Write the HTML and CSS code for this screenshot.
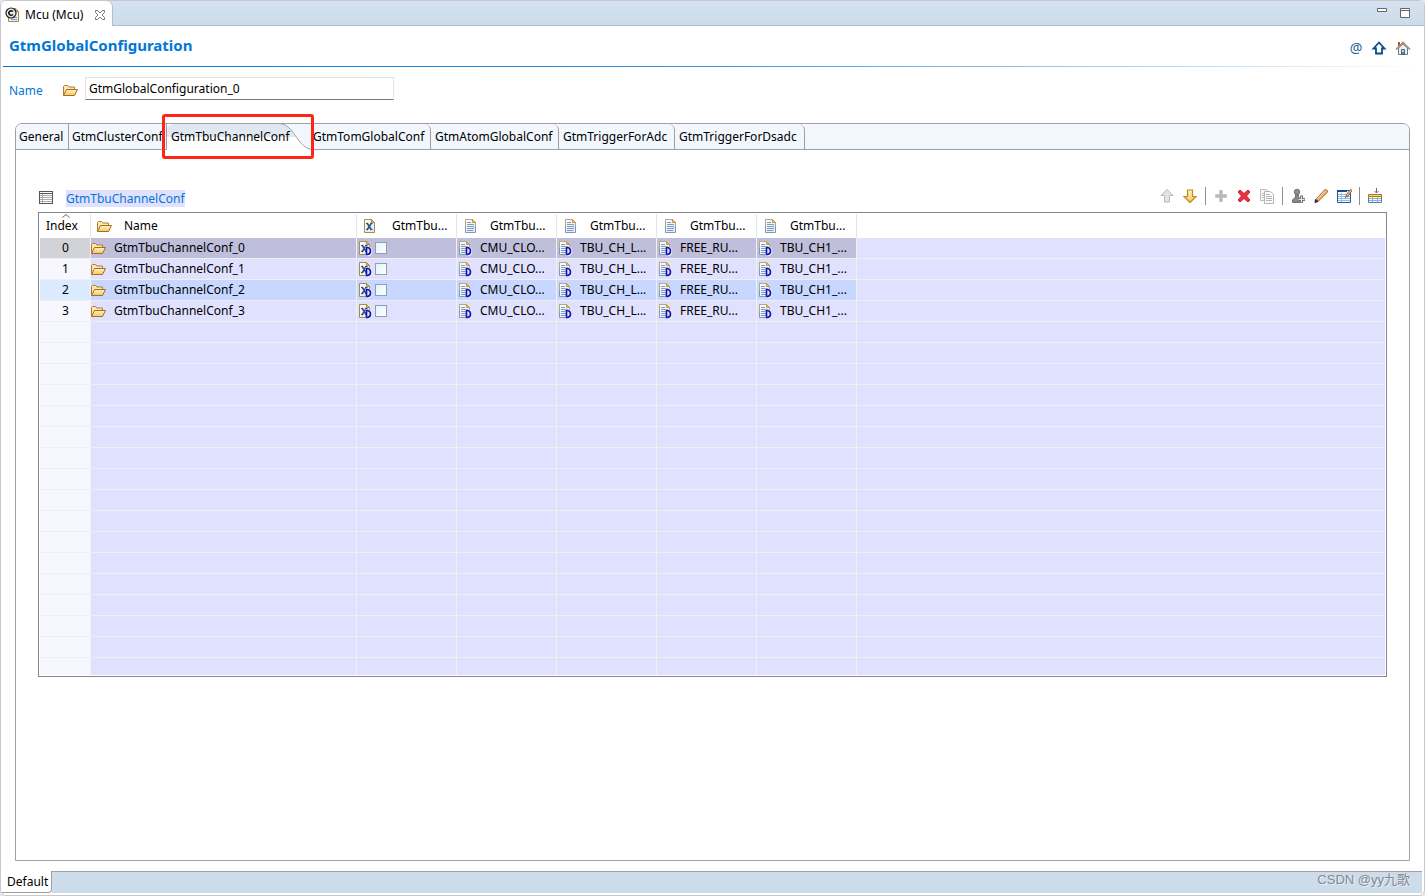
FILE: index.html
```html
<!DOCTYPE html>
<html lang="en">
<head>
<meta charset="utf-8">
<title>Mcu (Mcu)</title>
<link rel="stylesheet" href="styles.css">
</head>
<body>
<svg class="defs" aria-hidden="true">
  <defs>
    <linearGradient id="gold" x1="0" y1="0" x2="0" y2="1"><stop offset="0" stop-color="#fff3c4"/><stop offset="1" stop-color="#f3c566"/></linearGradient>
    <linearGradient id="paper" x1="0" y1="0" x2="1" y2="1"><stop offset="0" stop-color="#ffffff"/><stop offset="1" stop-color="#dbe6f6"/></linearGradient>
  </defs>
  <symbol id="folder" viewBox="1 0 16 16">
    <path d="M1.500 13V4.500l1-1h3l1.500 1.500h5.500v3" fill="#fbe6b0" stroke="#b27a2c"/>
    <path d="M1.500 13.500L4.500 7.500h11L12.500 13.500z" fill="url(#gold)" stroke="#a86d20"/>
  </symbol>
  <symbol id="doc" viewBox="1 0 16 16">
    <path d="M3.500 1.500h7l3 3v10h-10z" fill="url(#paper)" stroke="#8796ae"/>
    <path d="M3.500 8V1.500h7l3 3V7" fill="none" stroke="#b9a878"/>
    <path d="M10.500 1.500v3h3z" fill="#e5c169" stroke="#c49b48"/>
    <path d="M5 4.500h4M5 6.500h7M5 8.500h7M5 10.500h7M5 12.500h6" stroke="#7d9cc4"/>
  </symbol>
  <symbol id="xdoc" viewBox="1 0 16 16">
    <path d="M3.500 1.500h7l3 3v10h-10z" fill="url(#paper)" stroke="#ad8a42"/>
    <path d="M10.500 1.500v3h3z" fill="#e5c169" stroke="#b68c3b"/>
    <path d="M6 5l4.500 7M10.500 5L6 12" stroke="#2e527c" stroke-width="1.600"/>
    <path d="M5 5.500h2M9.500 5.500h2M5 11.500h2M9.500 11.500h2" stroke="#2e527c"/>
  </symbol>
  <symbol id="badge" viewBox="1 0 16 16">
    <path d="M9.500 7.500h2Q15 8 15 11.500T11.500 15h-2" fill="none" stroke="#e4e6ff" stroke-width="2.600"/>
    <path d="M10.500 7.500h1Q14.500 8 14.500 11T11.500 14.500h-1z" fill="#dfe1ff" stroke="#1414a8" stroke-width="1.600"/>
  </symbol>
</svg>

<main class="editor">
  <header class="topbar">
    <div class="file-tab">
      <svg class="icon" viewBox="0 0 16 16"><path d="M5.500 1.500h5l3 3v10h-10V8" fill="url(#paper)" stroke="#ad8a42"/><path d="M10.500 1.500v3h3z" fill="#e5c169" stroke="#b68c3b"/><path d="M6 10.500h6M6 12.500h6" stroke="#7d9cc4"/><circle cx="6" cy="6" r="5" fill="#e8e8e8" stroke="#222" stroke-width="1.200"/><path d="M8 4.500Q6 3 4.500 4.500T4.500 7.500T8 7.500" fill="none" stroke="#111" stroke-width="1.500"/></svg>
      <span>Mcu (Mcu)</span>
      <button class="plain" aria-label="Close"><svg class="close-icon" viewBox="0 0 12 12"><path d="M1.500 1.500h2L6 4l2.500-2.500h2v2L8 6l2.500 2.500v2h-2L6 8l-2.500 2.500h-2v-2L4 6 1.500 3.500z" fill="#fff" stroke="#777"/></svg></button>
    </div>
    <div class="window-actions">
      <button class="plain" aria-label="Minimize"><svg class="win-icon" viewBox="0 0 12 12"><path d="M1.500 2.500h9v3h-9z" fill="#fff" stroke="#666"/></svg></button>
      <button class="plain" aria-label="Maximize"><svg class="win-icon" viewBox="0 0 12 12"><path d="M1.500 2.500h9v9h-9zM1.500 4.500h9" fill="#fff" stroke="#666"/></svg></button>
    </div>
  </header>

  <div class="title-row">
    <h1>GtmGlobalConfiguration</h1>
    <div class="title-actions">
      <button class="plain at" aria-label="Annotations">@</button>
      <button class="plain" aria-label="Up"><svg class="icon" viewBox="0 0 16 16"><path d="M8 2.500L13.500 8.500H11v5H5v-5H2.500z" fill="#fff" stroke="#0b4a8c" stroke-width="1.800"/></svg></button>
      <button class="plain" aria-label="Home"><svg class="icon" viewBox="0 0 16 16"><path d="M4 2v4" stroke="#a25c45" stroke-width="2"/><path d="M3.500 8v6.500h9V8L8 4z" fill="#e6f0f8" stroke="#5c7da0"/><path d="M1 9.500l7-7 7 7" fill="none" stroke="#b58a61" stroke-width="1.700"/><path d="M6.500 14.500v-5h3v5z" fill="#5b9447" stroke="#3f6aa8"/><path d="M7 10h2v2H7z" fill="#f6dc45"/></svg></button>
    </div>
  </div>

  <div class="name-row">
    <label for="name">Name</label>
    <svg class="icon"><use href="#folder"/></svg>
    <input id="name" type="text" value="GtmGlobalConfiguration_0">
  </div>

  <section class="folder">
    <div class="tabs" role="tablist">
      <button role="tab" class="tab w-general">General</button>
      <button role="tab" class="tab w-cluster">GtmClusterConf</button>
      <button role="tab" class="tab selected" aria-selected="true">
        <svg class="tab-curve" viewBox="0 0 34 27"><path d="M0 0C16 1 18 26 34 26.500V0z" fill="#f2f7fe"/><path d="M0 .5C16 1 18 26 34 26.500M0 .5h34" fill="none" stroke="#a0a0a0"/></svg>
        <span class="tab-label">GtmTbuChannelConf</span>
        <span class="highlight"></span>
      </button>
      <button role="tab" class="tab w-tom">GtmTomGlobalConf</button>
      <button role="tab" class="tab w-atom">GtmAtomGlobalConf</button>
      <button role="tab" class="tab w-adc">GtmTriggerForAdc</button>
      <button role="tab" class="tab w-dsadc">GtmTriggerForDsadc</button>
      <span class="tab-rest"></span>
    </div>

    <div class="panel">
      <div class="list-head">
        <svg class="icon" viewBox="0 0 16 16" shape-rendering="crispEdges"><path d="M1.500 1.500h13v12h-13z" fill="#fff" stroke="#555"/><path d="M2 3.500h12" stroke="#555"/><path d="M4.500 4v9M5 5.500h9M5 7.500h9M5 9.500h9M5 11.500h9M2 5.500h2M2 7.500h2M2 9.500h2M2 11.500h2" stroke="#aaa"/></svg>
        <h2>GtmTbuChannelConf</h2>
        <div class="toolbar">
          <button class="plain" aria-label="Move up"><svg class="icon" viewBox="0 0 16 16"><path d="M8 1.500l6 6h-3.500v6.500h-5V7.500H2z" fill="#e4e4e0" stroke="#b9b9b5"/></svg></button>
          <button class="plain" aria-label="Move down"><svg class="icon" viewBox="0 0 16 16"><path d="M8 14.500l6-6h-3.500V2h-5v6.500H2z" fill="url(#gold)" stroke="#c18a12" stroke-width="1.200"/></svg></button>
          <span class="separator"></span>
          <button class="plain" aria-label="Add"><svg class="icon" viewBox="0 0 16 16"><path d="M6.500 2.500h3v4h4v3h-4v4h-3v-4h-4v-3h4z" fill="#b7b9b2" stroke="#c9cac4"/></svg></button>
          <button class="plain" aria-label="Delete"><svg class="icon" viewBox="0 0 16 16"><path d="M2 4l2-2 4 3.500L12 2l2 2-3.500 4 3.500 4-2 2-4-3.500L4 14l-2-2 3.500-4z" fill="#ed3044" stroke="#c3202e"/></svg></button>
          <button class="plain" aria-label="Duplicate"><svg class="icon" viewBox="0 0 16 16"><path d="M1.500 1.500h6l2 2v9h-8z" fill="#f5f5f3" stroke="#bcbcb8"/><path d="M3 5.500h2M3 7.500h2M3 9.500h2" stroke="#bbb"/><path d="M5.500 3.500h6l3 3v9h-9z" fill="#fafaf8" stroke="#b4b4b0"/><path d="M7 6.500h4M7 8.500h6M7 10.500h6M7 12.500h6" stroke="#b4b4b0"/></svg></button>
          <span class="separator"></span>
          <button class="plain" aria-label="Add user value"><svg class="icon" viewBox="0 0 16 16"><circle cx="7" cy="4" r="2.800" fill="#8e8e8e" stroke="#777"/><path d="M5.500 7h3v2l2 2v3.500h-8V12l3-3z" fill="#888" stroke="#717171"/><path d="M11.500 7.500v7.500M8 11.500h7" stroke="#777" stroke-width="3"/><path d="M11.500 8.500v6M8.500 11.500h6" stroke="#e8e8e8"/></svg></button>
          <button class="plain" aria-label="Edit"><svg class="icon" viewBox="0 0 16 16"><path d="M3 11.500L11.500 2l1.500-.5 1.500 1.500-.5 1.500L5 13.500z" fill="#f5b16a" stroke="#a65d24"/><path d="M2 14.500l.5-3 2.500 2z" fill="#18357c" stroke="#102866"/><path d="M5 10.500l7-7.500" stroke="#ffe0b6"/></svg></button>
          <button class="plain" aria-label="Edit table"><svg class="icon" viewBox="0 0 16 16"><path d="M1.500 2.500h13v12h-13z" fill="#f4faff" stroke="#24609d"/><path d="M1 3h10" stroke="#154d8b" stroke-width="2"/><path d="M5.500 5v9M2 6.500h12M2 8.500h12M2 10.500h12M2 12.500h12" stroke="#93bde4"/><path d="M9.500 9.500l1-3 4-5 1.500 1-4 5.500z" fill="#efc49a" stroke="#8f5c3a"/></svg></button>
          <span class="separator"></span>
          <button class="plain" aria-label="Insert column"><svg class="icon" viewBox="0 0 16 16"><path d="M1.500 6.500h13v8h-13z" fill="#f4faff" stroke="#5580a2"/><path d="M2 10.500h12M2 12.500h12M5.500 8v6M10.500 8v6" stroke="#8db2d0"/><path d="M1.500 6.500h13v2h-13z" fill="#ffd36a" stroke="#b87a18"/><path d="M9.500 0v5M7.500 3l2 2 2-2" fill="none" stroke="#54738b"/></svg></button>
        </div>
      </div>

      <div class="grid">
        <table>
          <colgroup><col class="c-index"><col class="c-name"><col class="c-val"><col class="c-val"><col class="c-val"><col class="c-val"><col class="c-val"><col></colgroup>
          <thead>
            <tr>
              <th class="index"><svg class="sort" viewBox="0 0 8 4"><path d="M.5 3.500L4 .5l3.500 3" fill="none" stroke="#666"/></svg>Index</th>
              <th><span class="head"><svg class="icon"><use href="#folder"/></svg>Name</span></th>
              <th><span class="head x-head"><svg class="icon"><use href="#xdoc"/></svg>GtmTbu...</span></th>
              <th><span class="head"><svg class="icon"><use href="#doc"/></svg>GtmTbu...</span></th>
              <th><span class="head"><svg class="icon"><use href="#doc"/></svg>GtmTbu...</span></th>
              <th><span class="head"><svg class="icon"><use href="#doc"/></svg>GtmTbu...</span></th>
              <th><span class="head"><svg class="icon"><use href="#doc"/></svg>GtmTbu...</span></th>
              <th class="rest"></th>
            </tr>
          </thead>
          <tbody id="rows"></tbody>
        </table>
      </div>
    </div>
  </section>

  <footer class="bottombar">
    <button class="page-tab">Default</button>
    <div class="bottom-fill"><span class="watermark">CSDN @yy九歌</span></div>
  </footer>
</main>
<script src="script.js"></script>
</body>
</html>
```
FILE: styles.css
```css
* { box-sizing: border-box; }

body {
  margin: 0;
  background: #e6e6f2;
  color: #000;
  font: 12px/16px "Noto Sans", "Noto Sans CJK SC", sans-serif;
}

button, input { font: inherit; color: inherit; }
h1, h2 { margin: 0; }
.defs { position: absolute; width: 0; height: 0; }
.icon { display: block; flex: none; width: 16px; height: 16px; }

.plain {
  display: block;
  padding: 0;
  border: 0;
  background: none;
}

.editor {
  display: flex;
  flex-direction: column;
  min-height: 100vh;
  border: 1px solid #c8c8c8;
  border-radius: 6px;
  background: #fff;
  overflow: hidden;
}

.topbar {
  display: flex;
  justify-content: space-between;
  height: 25px;
  border-bottom: 1px solid #b4bccb;
  background: linear-gradient(#d3e1f0, #cddceb);
}

.file-tab {
  display: flex;
  align-items: center;
  gap: 4px;
  height: 25px;
  padding: 2px 6px 0 4px;
  border-right: 1px solid #b4bccb;
  border-radius: 0 6px 0 0;
  background: #fff;
}

.file-tab .plain { margin-left: 7px; }
.close-icon { display: block; width: 12px; height: 12px; }
.window-actions { display: flex; gap: 11px; padding: 5px 13px 0 0; align-items: flex-start; }
.win-icon { display: block; width: 12px; height: 12px; }

.title-row {
  display: flex;
  align-items: center;
  justify-content: space-between;
  height: 41px;
  margin: 0 2px;
  padding: 0 11px 0 6px;
  border-bottom: 1px solid;
  border-image: linear-gradient(90deg, #0078d7, #3a95dd 50%, #fff) 1;
}

h1 { padding-bottom: 2px; color: #0078d7; font-size: 15px; line-height: 20px; }
.title-actions { display: flex; align-items: center; gap: 8px; padding-top: 4px; }
.at { width: 14px; color: #2b6496; font-size: 14px; }

.name-row { display: flex; align-items: center; padding: 10px 8px 0; }
.name-row label { width: 54px; color: #0078d7; padding-top: 4px; }
.name-row .icon { margin-top: 3px; }

.name-row input {
  width: 309px;
  height: 23px;
  margin-left: 6px;
  padding: 0 3px;
  border: 1px solid #e3e3e3;
  border-bottom-color: #7a7a7a;
  background: #fff;
}

.folder {
  display: flex;
  flex: 1;
  flex-direction: column;
  margin: 23px 14px 10px;
  border: 1px solid #a0a0a0;
  border-radius: 7px 7px 0 0;
}

.tabs { display: flex; height: 26px; }

.tab {
  height: 26px;
  padding: 0 0 0 4px;
  border: solid #a0a0a0;
  border-width: 0 1px 1px 0;
  background: #f2f7fe;
  text-align: left;
  white-space: nowrap;
}

.tab:first-child { padding-left: 3px; border-top-left-radius: 6px; }
.w-general { width: 53px; }
.w-cluster { width: 98px; padding-left: 3px; }
.w-tom { width: 118px; padding-left: 0; border-top-right-radius: 6px; }
.w-atom { width: 128px; border-top-right-radius: 6px; }
.w-adc { width: 116px; border-top-right-radius: 6px; }
.w-dsadc { width: 130px; border-top-right-radius: 6px; }

.selected {
  position: relative;
  width: 146px;
  border-width: 0;
  border-top-left-radius: 6px;
  background: linear-gradient(#dfe7f1, #e0e8f2 50%, #fff 50%);
}

.tab-label { position: relative; }
.tab-curve { position: absolute; top: -1px; right: 0; width: 34px; height: 27px; }

.highlight {
  position: absolute;
  z-index: 1;
  inset: -10px -1px -9px -5px;
  border: 3px solid #ff2414;
  border-radius: 3px;
}

.tab-rest { flex: 1; border-bottom: 1px solid #a0a0a0; border-radius: 0 6px 0 0; background: #f2f7fe; }

.panel { padding: 35px 22px 22px; }
.list-head { display: flex; align-items: center; height: 26px; margin-bottom: 1px; }
.list-head h2 {
  margin-left: 12px;
  background: #e0e0ff;
  color: #0078d7;
  font-size: 12px;
  font-weight: 400;
  line-height: 17px;
}

.toolbar { display: flex; align-items: center; gap: 7px; margin-left: auto; padding: 0 4px 4px 0; }
.separator { width: 1px; height: 18px; background: #8c8c8c; }

.grid { height: 465px; padding: 1px; border: 1px solid #828790; overflow: clip; overflow-clip-margin: content-box; }
.grid table { width: 100%; border-spacing: 0; table-layout: fixed; }
.grid thead tr { height: 24px; }
.grid tbody tr { height: 21px; }
.c-index { width: 51px; }
.c-name { width: 266px; }
.c-val { width: 100px; }

.grid th, .grid td {
  padding: 0;
  border-right: 1px solid #f0f0f0;
  font-weight: 400;
  text-align: left;
  white-space: nowrap;
}

.grid th { border-color: #e5e5e5; }
.grid td { border-bottom: 1px solid #f0f0f0; background: #e0e0ff; }
.grid .rest, .grid td:last-child { border-right: 0; }
.grid .index { position: relative; padding-left: 6px; }
.grid td.index { padding: 0 0 0 1px; background: #f7f7ff; text-align: center; }
.sort { position: absolute; top: 0; left: 22px; width: 8px; height: 4px; }

.head { display: flex; align-items: center; gap: 11px; padding-left: 6px; }
.x-head { gap: 14px; padding-left: 5px; }
.cell { display: flex; align-items: center; gap: 7px; }
.cell-check { gap: 2px; }

.picked td { background: #bfbedb; }
.picked td.index { background: #d2d3d8; }
.hover td { background: #c8d7ff; }
.hover td.index { background: #dbebff; }
.picked td:last-child, .hover td:last-child { background: #e0e0ff; }

.check {
  width: 12px;
  height: 12px;
  margin: 0;
  border: 1px solid #8e9fb5;
  background: linear-gradient(135deg, #e1f3fb, #fff);
  appearance: none;
}

.bottombar { display: flex; height: 24px; padding-bottom: 2px; }

.page-tab {
  width: 51px;
  padding: 0 0 0 6px;
  border: solid #a0a0a0;
  border-width: 0 1px 1px 0;
  border-radius: 0 0 4px 0;
  background: #fff;
  text-align: left;
}

.bottom-fill { flex: 1; margin-right: 2px; padding-right: 12px; border-top: 1px solid #a0a0a0; background: #cddceb; text-align: right; }
.watermark { color: #84898f; font: 13px/16px "Liberation Sans", "Noto Sans CJK SC", sans-serif; text-shadow: 1px 1px #e8eef5; }
```
FILE: script.js
```js
const body = document.getElementById("rows");
const values = ["CMU_CLO...", "TBU_CH_L...", "FREE_RU...", "TBU_CH1_..."];
const state = { 0: "picked", 2: "hover" };
const icon = (...ids) =>
  `<svg class="icon">${ids.map((id) => `<use href="#${id}"/>`).join("")}</svg>`;

let html = "";
for (let i = 0; i < 4; i++) {
  html += `<tr class="${state[i] || ""}"><td class="index">${i}</td>
    <td><label class="cell" for="check-${i}">${icon("folder")}GtmTbuChannelConf_${i}</label></td>
    <td><span class="cell cell-check">${icon("xdoc", "badge")}<input class="check" type="checkbox" id="check-${i}"></span></td>
    ${values.map((v) => `<td><span class="cell">${icon("doc", "badge")}${v}</span></td>`).join("")}
    <td></td></tr>`;
}
for (let i = 0; i < 17; i++) {
  html += `<tr><td class="index"></td>${"<td></td>".repeat(7)}</tr>`;
}
body.innerHTML = html;
```
